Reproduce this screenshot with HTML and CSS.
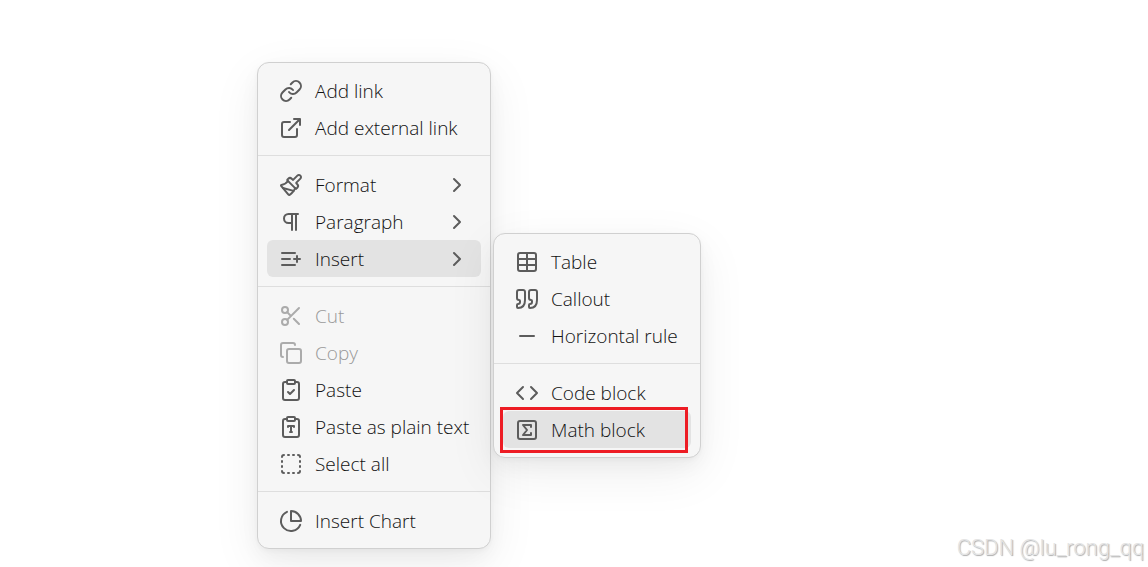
FILE: index.html
```
<!DOCTYPE html>
<html lang="en">

<head>
    <meta charset="UTF-8">
    <meta name="viewport" content="width=device-width, initial-scale=1.0">
    <title>Context menu</title>
    <link rel="stylesheet" href="styles.css">
</head>

<body>
    <main class="page">
        <div class="menu menu-main">
            <button class="menu-item" type="button">
                <svg class="icon" viewBox="0 0 24 24"><path d="M10 13a5 5 0 0 0 7.54.54l3-3a5 5 0 0 0-7.07-7.07l-1.72 1.71"/><path d="M14 11a5 5 0 0 0-7.54-.54l-3 3a5 5 0 0 0 7.07 7.07l1.71-1.71"/></svg>
                <span class="label">Add link</span>
            </button>
            <button class="menu-item" type="button">
                <svg class="icon" viewBox="0 0 24 24"><path d="M15 3h6v6M10 14 21 3M18 13v6a2 2 0 0 1-2 2H5a2 2 0 0 1-2-2V8a2 2 0 0 1 2-2h6"/></svg>
                <span class="label">Add external link</span>
            </button>
            <hr class="separator">
            <button class="menu-item" type="button">
                <svg class="icon" viewBox="0 0 24 24"><path d="m14.622 17.897-10.68-2.913"/><path d="M18.376 2.622a1 1 0 1 1 3.002 3.002L17.36 9.643a.5.5 0 0 0 0 .707l.944.944a2.41 2.41 0 0 1 0 3.408l-.944.944a.5.5 0 0 1-.707 0L8.354 7.348a.5.5 0 0 1 0-.707l.944-.944a2.41 2.41 0 0 1 3.408 0l.944.944a.5.5 0 0 0 .707 0z"/><path d="M9 8c-1.804 2.71-3.97 3.46-6.583 3.948a.507.507 0 0 0-.302.819l7.32 8.883a1 1 0 0 0 1.185.204C12.735 20.405 16 16.792 16 15"/></svg>
                <span class="label">Format</span>
                <svg class="icon" viewBox="0 0 24 24"><path d="m9 18 6-6-6-6"/></svg>
            </button>
            <button class="menu-item" type="button">
                <svg class="icon" viewBox="0 0 24 24"><path d="M13 4v16M17 4v16M19 4H9.5a4.5 4.5 0 0 0 0 9H13"/></svg>
                <span class="label">Paragraph</span>
                <svg class="icon" viewBox="0 0 24 24"><path d="m9 18 6-6-6-6"/></svg>
            </button>
            <button class="menu-item selected" type="button">
                <svg class="icon" viewBox="0 0 24 24"><path d="M11 12H3M16 6H3M16 18H3M18 9v6M21 12h-6"/></svg>
                <span class="label">Insert</span>
                <svg class="icon" viewBox="0 0 24 24"><path d="m9 18 6-6-6-6"/></svg>
            </button>
            <hr class="separator">
            <button class="menu-item" type="button" disabled>
                <svg class="icon" viewBox="0 0 24 24"><circle cx="6" cy="6" r="3"/><circle cx="6" cy="18" r="3"/><path d="M8.12 8.12 12 12M20 4 8.12 15.88M14.8 14.8 20 20"/></svg>
                <span class="label">Cut</span>
            </button>
            <button class="menu-item" type="button" disabled>
                <svg class="icon" viewBox="0 0 24 24"><rect x="8" y="8" width="14" height="14" rx="2"/><path d="M4 16c-1.1 0-2-.9-2-2V4c0-1.1.9-2 2-2h10c1.1 0 2 .9 2 2"/></svg>
                <span class="label">Copy</span>
            </button>
            <button class="menu-item" type="button">
                <svg class="icon" viewBox="0 0 24 24"><rect x="8" y="2" width="8" height="4" rx="1"/><path d="M16 4h2a2 2 0 0 1 2 2v14a2 2 0 0 1-2 2H6a2 2 0 0 1-2-2V6a2 2 0 0 1 2-2h2"/><path d="m9 14 2 2 4-4"/></svg>
                <span class="label">Paste</span>
            </button>
            <button class="menu-item" type="button">
                <svg class="icon" viewBox="0 0 24 24"><rect x="8" y="2" width="8" height="4" rx="1"/><path d="M16 4h2a2 2 0 0 1 2 2v14a2 2 0 0 1-2 2H6a2 2 0 0 1-2-2V6a2 2 0 0 1 2-2h2"/><path d="M9 12v-1h6v1M11 17h2M12 11v6"/></svg>
                <span class="label">Paste as plain text</span>
            </button>
            <button class="menu-item" type="button">
                <svg class="icon" viewBox="0 0 24 24"><path d="M5 3a2 2 0 0 0-2 2M19 3a2 2 0 0 1 2 2M21 19a2 2 0 0 1-2 2M5 21a2 2 0 0 1-2-2M9 3h1M9 21h1M14 3h1M14 21h1M3 9v1M21 9v1M3 14v1M21 14v1"/></svg>
                <span class="label">Select all</span>
            </button>
            <hr class="separator">
            <button class="menu-item" type="button">
                <svg class="icon" viewBox="0 0 24 24"><path d="M21.21 15.89A10 10 0 1 1 8 2.83"/><path d="M22 12A10 10 0 0 0 12 2v10z"/></svg>
                <span class="label">Insert Chart</span>
            </button>
        </div>

        <div class="menu menu-sub">
            <button class="menu-item" type="button">
                <svg class="icon" viewBox="0 0 24 24"><rect x="3" y="3" width="18" height="18" rx="2"/><path d="M12 3v18M3 9h18M3 15h18"/></svg>
                <span class="label">Table</span>
            </button>
            <button class="menu-item" type="button">
                <svg class="icon" viewBox="0 0 24 24"><path d="M3 21c3 0 7-1 7-8V5c0-1.25-.756-2.017-2-2H4c-1.25 0-2 .75-2 1.972V11c0 1.25.75 2 2 2 1 0 1 0 1 1v1c0 1-1 2-2 2s-1 .008-1 1.031V20c0 1 0 1 1 1z"/><path d="M15 21c3 0 7-1 7-8V5c0-1.25-.757-2.017-2-2h-4c-1.25 0-2 .75-2 1.972V11c0 1.25.75 2 2 2 1 0 1 0 1 1v1c0 1-1 2-2 2s-1 .008-1 1.031V20c0 1 0 1 1 1z"/></svg>
                <span class="label">Callout</span>
            </button>
            <button class="menu-item" type="button">
                <svg class="icon" viewBox="0 0 24 24"><path d="M5 12h14"/></svg>
                <span class="label">Horizontal rule</span>
            </button>
            <hr class="separator">
            <button class="menu-item" type="button">
                <svg class="icon" viewBox="0 0 24 24"><path d="m16 18 6-6-6-6M8 6l-6 6 6 6"/></svg>
                <span class="label">Code block</span>
            </button>
            <button class="menu-item selected marked" type="button">
                <svg class="icon" viewBox="0 0 24 24"><rect x="3" y="3" width="18" height="18" rx="2"/><path d="M16 8.9V7H8l4 5-4 5h8v-1.9"/></svg>
                <span class="label">Math block</span>
            </button>
        </div>

        <p class="watermark">CSDN @lu_rong_qq</p>
    </main>
</body>

</html>
```
FILE: styles.css
```
* {
    box-sizing: border-box;
}
body {
    margin: 0;
    background-color: #fff;
    font-family: "Open Sans", "Noto Sans", sans-serif;
    font-size: 19px;
    font-weight: 300;
    color: #111;
}
.page {
    position: relative;
    min-height: 100vh;
    overflow: hidden;
    display: flex;
    justify-content: flex-end;
    align-items: flex-end;
}
.menu {
    position: absolute;
    display: flex;
    flex-direction: column;
    padding: 9px;
    background-color: #f6f6f6;
    border: 1px solid #d0d0d0;
    border-radius: 12px;
    box-shadow: 0 2px 5px rgba(0, 0, 0, 0.03), 0 8px 20px rgba(0, 0, 0, 0.04), 0 15px 50px rgba(0, 0, 0, 0.07);
}
.menu-main {
    left: 257px;
    top: 62px;
    min-width: 233px;
}
.menu-sub {
    left: 493px;
    top: 233px;
    min-width: 208px;
}
.menu-item {
    position: relative;
    display: flex;
    align-items: center;
    gap: 12px;
    height: 37px;
    padding: 0 12px;
    border: 0;
    border-radius: 6px;
    background: none;
    color: inherit;
    font: inherit;
    text-align: left;
    white-space: nowrap;
}
.menu-item:disabled {
    color: #999;
}
.menu-item:disabled .icon {
    color: #ababab;
}
.selected {
    background-color: #e3e3e3;
}
.label {
    flex: 1;
}
.icon {
    width: 24px;
    height: 24px;
    flex: none;
    color: #5c5c5c;
    fill: none;
    stroke: currentColor;
    stroke-width: 2;
    stroke-linecap: round;
    stroke-linejoin: round;
}
.separator {
    width: calc(100% + 18px);
    height: 1px;
    margin: 9px -9px 10px;
    border: 0;
    background-color: #dedede;
}
/* red frame around the highlighted entry */
.marked::after {
    content: "";
    position: absolute;
    top: -4px;
    right: 3px;
    bottom: -5px;
    left: -3px;
    border: 3px solid #ed1c24;
}
.watermark {
    margin: 0;
    padding: 0 4px 6px 0;
    font-family: Roboto, "Liberation Sans", Arial, sans-serif;
    font-size: 22px;
    line-height: 26px;
    color: #e4e4e4;
    text-shadow: 1px 1px 1px #aaa;
}
```
